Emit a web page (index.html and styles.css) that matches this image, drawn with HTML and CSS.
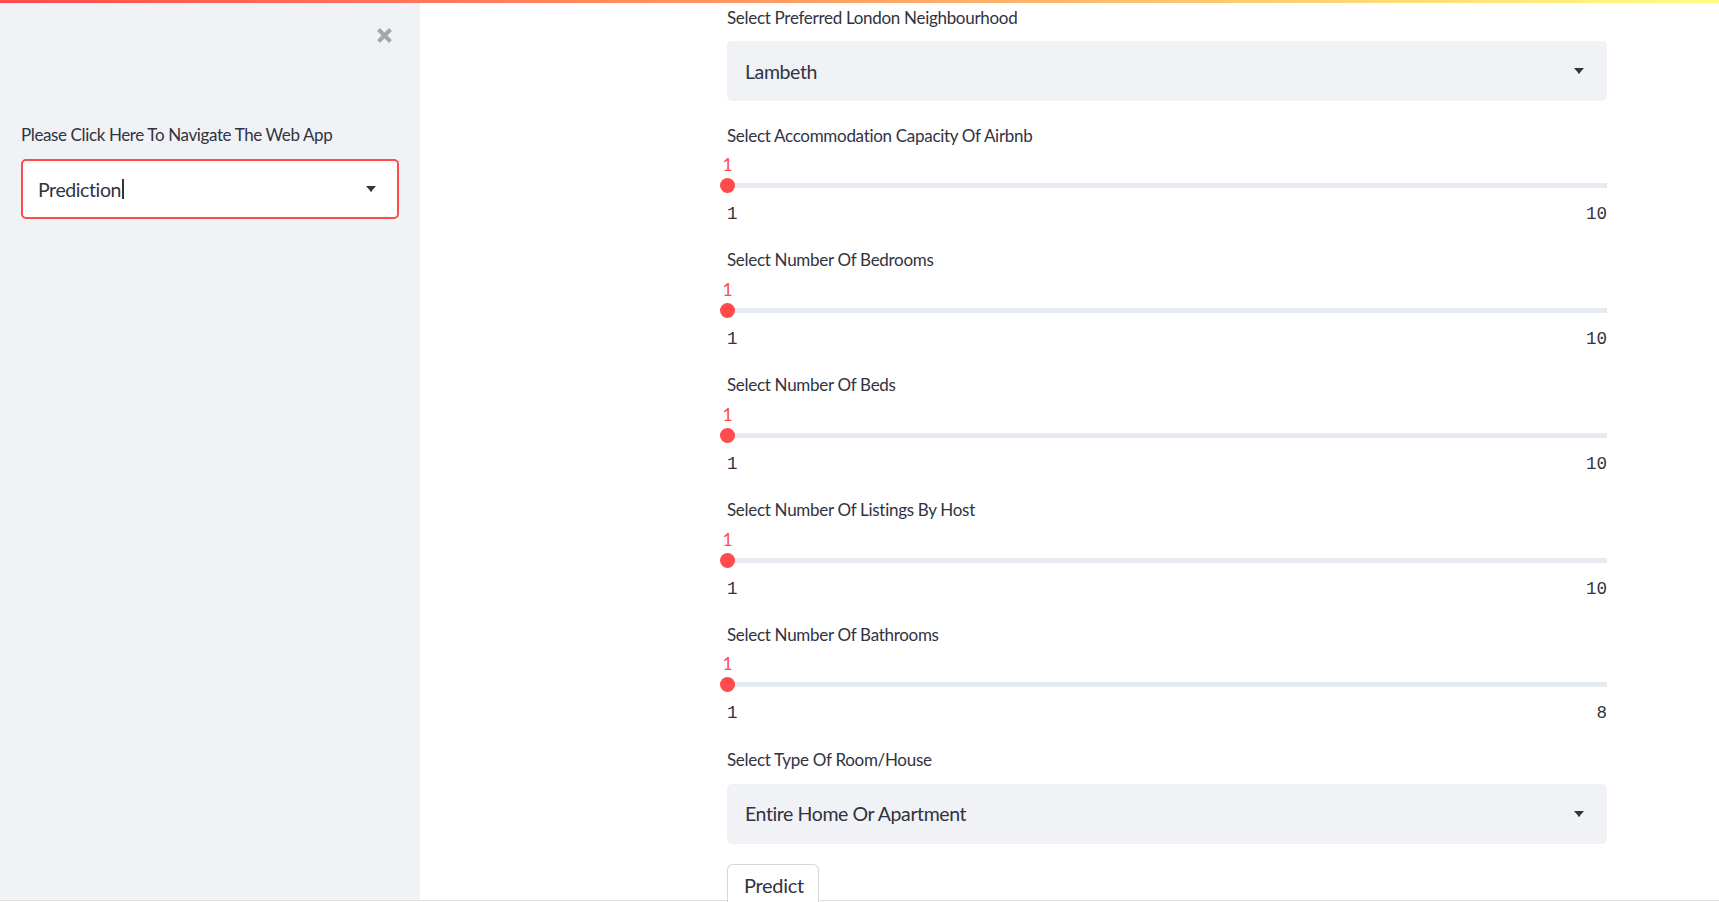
FILE: index.html
```html
<!DOCTYPE html>
<html lang="en">
<head>
<meta charset="utf-8">
<title>London Airbnb Price Prediction</title>
<link rel="stylesheet" href="styles.css">
</head>
<body>
<div class="decoration"></div>
<div class="app">
  <aside class="sidebar">
    <div class="sidebar-head">
      <button class="close-btn" aria-label="Close sidebar">
        <svg width="17" height="17" viewBox="0 0 17 17"><path d="M2.5 2.5 L14.5 14.5 M14.5 2.5 L2.5 14.5" stroke="#a3a6ae" stroke-width="4" fill="none"/></svg>
      </button>
    </div>
    <div class="sidebar-body">
      <div class="field-label">Please Click Here To Navigate The Web App</div>
      <div class="select select-focus">
        <span class="select-value">Prediction<span class="caret"></span></span>
        <svg class="arrow" width="10" height="6" viewBox="0 0 10 6"><path d="M0 0 H10 L6 4.5 V5.5 H4 V4.5 Z" fill="#31333f"/></svg>
      </div>
    </div>
  </aside>
  <main class="main">
    <div class="column">
      <div class="field-label first">Select Preferred London Neighbourhood</div>
      <div class="select select-top">
        <span class="select-value">Lambeth</span>
        <svg class="arrow" width="10" height="6" viewBox="0 0 10 6"><path d="M0 0 H10 L6 4.5 V5.5 H4 V4.5 Z" fill="#31333f"/></svg>
      </div>

      <div class="slider-group">
        <div class="field-label">Select Accommodation Capacity Of Airbnb</div>
        <div class="slider-value">1</div>
        <div class="track"><span class="thumb"></span></div>
        <div class="ticks"><span>1</span><span>10</span></div>
      </div>

      <div class="slider-group">
        <div class="field-label">Select Number Of Bedrooms</div>
        <div class="slider-value">1</div>
        <div class="track"><span class="thumb"></span></div>
        <div class="ticks"><span>1</span><span>10</span></div>
      </div>

      <div class="slider-group">
        <div class="field-label">Select Number Of Beds</div>
        <div class="slider-value">1</div>
        <div class="track"><span class="thumb"></span></div>
        <div class="ticks"><span>1</span><span>10</span></div>
      </div>

      <div class="slider-group">
        <div class="field-label">Select Number Of Listings By Host</div>
        <div class="slider-value">1</div>
        <div class="track"><span class="thumb"></span></div>
        <div class="ticks"><span>1</span><span>10</span></div>
      </div>

      <div class="slider-group">
        <div class="field-label">Select Number Of Bathrooms</div>
        <div class="slider-value">1</div>
        <div class="track"><span class="thumb"></span></div>
        <div class="ticks"><span>1</span><span>8</span></div>
      </div>

      <div class="field-label">Select Type Of Room/House</div>
      <div class="select select-bottom">
        <span class="select-value">Entire Home Or Apartment</span>
        <svg class="arrow" width="10" height="6" viewBox="0 0 10 6"><path d="M0 0 H10 L6 4.5 V5.5 H4 V4.5 Z" fill="#31333f"/></svg>
      </div>

      <button class="predict-btn">Predict</button>
    </div>
  </main>
</div>
</body>
</html>
```
FILE: styles.css
```css
* { box-sizing: border-box; }

html, body {
  margin: 0;
  padding: 0;
  height: 100%;
  overflow: hidden;
  background: #ffffff;
  font-family: Lato, "Noto Sans", sans-serif;
  color: #31333f;
}

.decoration {
  height: 3px;
  background: linear-gradient(90deg, #ff4b4b, #fffd80);
}

.app {
  display: flex;
  height: 898px;
  border-bottom: 1px solid #e6dcdc;
}

.sidebar {
  width: 420px;
  flex: none;
  background: #f0f2f6;
  display: flex;
  flex-direction: column;
}

.sidebar-head {
  display: flex;
  justify-content: flex-end;
  padding: 23.5px 27px 0 0;
}

.close-btn {
  border: none;
  background: none;
  padding: 0;
  width: 17px;
  height: 17px;
  display: block;
}
.close-btn svg { display: block; }

.sidebar-body {
  padding: 79.5px 0 0 21px;
}

.sidebar-body .field-label { letter-spacing: -0.38px; }

.field-label {
  font-size: 17px;
  letter-spacing: -0.3px;
  line-height: 24px;
  height: 24px;
  margin-bottom: 12px;
  white-space: nowrap;
}

.select {
  height: 60px;
  border-radius: 5px;
  background: #f0f2f6;
  display: flex;
  align-items: center;
  justify-content: space-between;
  padding: 0 23px 0 18px;
  font-size: 19.5px;
  letter-spacing: -0.4px;
}

.select-focus {
  width: 378px;
  background: #ffffff;
  border: 2px solid #ff4b4b;
  padding: 0 21px 0 15px;
}

.select-value {
  display: flex;
  align-items: center;
  white-space: nowrap;
}

.caret {
  display: inline-block;
  width: 2px;
  height: 20px;
  background: #31333f;
  margin-left: 1px;
}

.arrow { display: block; }

.main {
  flex: 1;
  padding: 2.5px 0 0 307px;
}

.column {
  width: 880px;
}

.field-label.first { margin-bottom: 11.5px; }

.select-top { margin-bottom: 22.5px; }
.select-bottom { margin-bottom: 20px; }

.slider-group {
  height: 124.85px;
}

.slider-group .field-label { margin-bottom: 7.5px; }

.slider-value {
  width: 15px;
  margin-left: -7px;
  text-align: center;
  color: #ff4b4b;
  font-size: 17.5px;
  line-height: 20px;
  height: 20px;
  margin-bottom: 3px;
}

.track {
  height: 15px;
  display: flex;
  align-items: center;
  background: linear-gradient(#e6eaf1, #e6eaf1) center / 100% 5px no-repeat;
  border-radius: 3px;
  margin-bottom: 11px;
}

.thumb {
  width: 15px;
  height: 15px;
  border-radius: 50%;
  background: #ff4b4b;
  margin-left: -7px;
}

.ticks {
  display: flex;
  justify-content: space-between;
  font-family: "Liberation Mono", "DejaVu Sans Mono", monospace;
  font-size: 17.5px;
  line-height: 20px;
  height: 20px;
}

.predict-btn {
  display: block;
  font-family: inherit;
  font-size: 20px;
  letter-spacing: -0.3px;
  line-height: 32px;
  color: #31333f;
  background: #ffffff;
  border: 1px solid rgba(49, 51, 63, 0.2);
  border-radius: 6px;
  padding: 4px 16px 6px;
  width: 92px;
}
```
